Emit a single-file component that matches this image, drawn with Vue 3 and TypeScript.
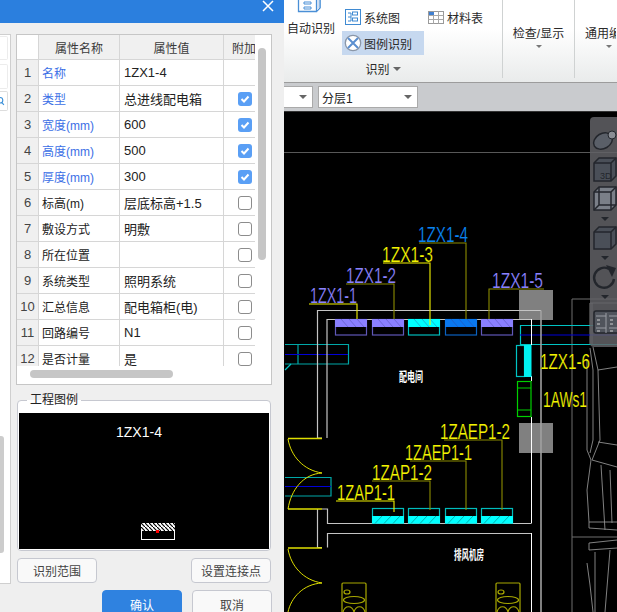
<script setup lang="ts">
interface Row { no: number; name: string; value: string; check: boolean | null; blue: boolean }

const rows: Row[] = [
  { no: 1, name: '名称', value: '1ZX1-4', check: null, blue: true },
  { no: 2, name: '类型', value: '总进线配电箱', check: true, blue: true },
  { no: 3, name: '宽度(mm)', value: '600', check: true, blue: true },
  { no: 4, name: '高度(mm)', value: '500', check: true, blue: true },
  { no: 5, name: '厚度(mm)', value: '300', check: true, blue: true },
  { no: 6, name: '标高(m)', value: '层底标高+1.5', check: false, blue: false },
  { no: 7, name: '敷设方式', value: '明敷', check: false, blue: false },
  { no: 8, name: '所在位置', value: '', check: false, blue: false },
  { no: 9, name: '系统类型', value: '照明系统', check: false, blue: false },
  { no: 10, name: '汇总信息', value: '配电箱柜(电)', check: false, blue: false },
  { no: 11, name: '回路编号', value: 'N1', check: false, blue: false },
  { no: 12, name: '是否计量', value: '是', check: false, blue: false },
]

const YEL = '#f4f400'
const OLV = '#8c8c00'
const PUR = '#8a82ff'

// cad labels: text, x, baseline, width, colour, leader line
const labels = [
  { t: '1ZX1-1', x: 310, y: 303, w: 47, c: PUR, lead: 'M309 304H357V319', lc: YEL },
  { t: '1ZX1-2', x: 346, y: 283, w: 50, c: PUR, lead: 'M346 284H394V319', lc: OLV },
  { t: '1ZX1-3', x: 382, y: 262, w: 51, c: YEL, lead: 'M383 263H430V325', lc: YEL },
  { t: '1ZX1-4', x: 418, y: 242, w: 50, c: '#0a84f4', lead: 'M419 243H466V319', lc: OLV },
  { t: '1ZX1-5', x: 492, y: 288, w: 51, c: PUR, lead: 'M544 289H489V319', lc: OLV },
  { t: '1ZAEP1-2', x: 440, y: 439, w: 70, c: YEL, lead: 'M444 440H502V510', lc: OLV },
  { t: '1ZAEP1-1', x: 405, y: 460, w: 67, c: YEL, lead: 'M410 461H466V510', lc: OLV },
  { t: '1ZAP1-2', x: 372, y: 480, w: 60, c: YEL, lead: 'M372 481H430V510', lc: OLV },
  { t: '1ZAP1-1', x: 337, y: 500, w: 58, c: YEL, lead: 'M336 501H394V512', lc: YEL },
]

const topBoxes = [
  { x: 335, fill: '#8a80ff', line: '#5f58b8' },
  { x: 372, fill: '#8a80ff', line: '#5f58b8' },
  { x: 408, fill: '#00ffff', line: '#00bcbc' },
  { x: 445, fill: '#0a78ee', line: '#0a62c0' },
  { x: 481, fill: '#8a80ff', line: '#5f58b8' },
]
const bottomBoxes = [372, 408, 445, 481]

const furniture = [
  'M593 347L598 370L600 440L592 460',
  'M590 348L593 370L593 440L590 453',
  'M587 360V450L591 460',
  'M598 370L617 367',
  'M598 442L617 445',
  'M592 460L617 467',
  'M601 465L605 530',
  'M610 470L612 523',
  'M591 460L587 490L589 522',
  'M589 522H617M589 528L617 530M589 522V528',
  'M589 543L617 540M589 550L617 548M589 543V550',
  'M595 552V612M587 563L590 585L593 612M610 550L605 612',
  'M590 303H617M592 303V345M590 303V345',
]
</script>

<template>
  <div class="screen">
    <section class="dialog">
      <header class="title">
        <svg width="12" height="12" viewBox="0 0 12 12"><path d="M1 1L11 11M11 1L1 11" stroke="#fff" stroke-width="1.5" /></svg>
      </header>
      <div class="dialog-body">
        <aside class="strip">
          <div class="strip-box b1"></div>
          <div class="strip-box b2"></div>
          <div class="strip-box b3">
            <svg width="9" height="12" viewBox="0 0 9 12"><circle cx="0" cy="5" r="3.6" fill="none" stroke="#3a8fd8" stroke-width="1.4" /><path d="M2.5 8L5 11" stroke="#3a8fd8" stroke-width="1.4" /></svg>
          </div>
          <div class="strip-thumb"></div>
        </aside>
        <main class="main">
          <div class="grid-panel">
            <div class="grid-clip">
              <table class="grid">
                <colgroup><col class="c0" /><col class="c1" /><col class="c2" /><col class="c3" /></colgroup>
                <thead>
                  <tr><th class="corner"></th><th>属性名称</th><th>属性值</th><th class="extra">附加</th></tr>
                </thead>
                <tbody>
                  <tr v-for="r in rows" :key="r.no">
                    <td class="no">{{ r.no }}</td>
                    <td class="name" :class="{ blue: r.blue }">{{ r.name }}</td>
                    <td class="val">{{ r.value }}</td>
                    <td class="chk">
                      <span v-if="r.check !== null" class="box" :class="{ on: r.check }">
                        <svg v-if="r.check" width="14" height="14" viewBox="0 0 14 14"><path d="M3.5 7L6 9.5L10.5 4.5" fill="none" stroke="#fff" stroke-width="2" /></svg>
                      </span>
                    </td>
                  </tr>
                </tbody>
              </table>
            </div>
            <div class="vbar"></div>
            <div class="hbar"></div>
          </div>

          <div class="legend-group">
            <span class="legend-title">工程图例</span>
            <svg class="legend-canvas" width="250" height="136" viewBox="19 412 250 136">
              <rect x="19" y="412" width="250" height="136" fill="#000" />
              <text x="139" y="436" text-anchor="middle" class="legend-text">1ZX1-4</text>
              <defs>
                <pattern id="hatch" width="4" height="4" patternUnits="userSpaceOnUse" patternTransform="translate(141 522)">
                  <rect width="4" height="4" fill="#fff" />
                  <path d="M0 0L4 4" stroke="#000" stroke-width="1.2" />
                </pattern>
              </defs>
              <rect x="141.5" y="522.5" width="33" height="16" fill="#000" stroke="#fff" />
              <rect x="141" y="522" width="34" height="8" fill="url(#hatch)" />
              <rect x="156" y="529" width="3" height="3" fill="#f00" />
            </svg>
          </div>

          <div class="tool-row">
            <button class="btn">识别范围</button>
            <button class="btn">设置连接点</button>
          </div>
          <div class="foot-row">
            <button class="btn foot primary">确认</button>
            <button class="btn foot">取消</button>
          </div>
        </main>
      </div>
    </section>

    <section class="app">
      <div class="ribbon">
        <div class="rb-auto">
          <svg class="auto-icon" width="24" height="13" viewBox="0 0 24 13">
            <path d="M1.5 -2V11.5H19.5V-2M19.5 11.5L23 8V-2" fill="#fff" stroke="#4a8fd6" stroke-width="1.3" />
            <path d="M19.5 11.5L23 8V-2H19.5Z" fill="#cfdff2" stroke="#4a8fd6" />
            <path d="M7 2H14V4H7ZM7 7H14V9H7Z" fill="none" stroke="#4a8fd6" />
          </svg>
          <span class="rb-label">自动识别</span>
        </div>
        <div class="rb-recog">
          <div class="rb-item top">
            <svg width="16" height="16" viewBox="0 0 16 16">
              <rect x=".5" y=".5" width="15" height="15" fill="#fff" stroke="#3f8ad2" />
              <path d="M3 4H6M3 8H6M3 12H6M6 4V12" stroke="#3f8ad2" fill="none" />
              <rect x="7.5" y="3" width="5" height="3" fill="none" stroke="#3f8ad2" />
              <rect x="7.5" y="9" width="5" height="3" fill="none" stroke="#3f8ad2" />
            </svg>
            <span>系统图</span>
          </div>
          <div class="rb-item top second">
            <svg width="16" height="13" viewBox="0 0 16 13">
              <rect x=".5" y=".5" width="15" height="12" fill="#fff" stroke="#9a9a9a" />
              <path d="M.5 4.5H15.5M.5 8.5H15.5M5.5 .5V12.5M10.5 .5V12.5" stroke="#a8a8a8" />
              <rect x="1" y="1" width="5" height="3" fill="#3f7fd0" />
            </svg>
            <span>材料表</span>
          </div>
          <div class="rb-item active">
            <svg width="18" height="18" viewBox="0 0 18 18">
              <circle cx="9" cy="9" r="7.7" fill="#fff" stroke="#8b97a8" stroke-width="1.3" />
              <path d="M4 4L14 14M14 4L4 14" stroke="#5b8fd0" stroke-width="2" />
            </svg>
            <span>图例识别</span>
          </div>
          <div class="rb-caption">识别 <i class="arrow"></i></div>
        </div>
        <div class="rb-col w71">
          <span>检查/显示</span><i class="arrow small"></i>
        </div>
        <div class="rb-col last">
          <span>通用编辑</span><i class="arrow small"></i>
        </div>
      </div>

      <div class="toolbar">
        <div class="select first"><i class="arrow"></i></div>
        <div class="select second"><span>分层1</span><i class="arrow"></i></div>
      </div>

      <svg class="cad" width="333" height="500" viewBox="284 112 333 500">
        <rect x="284" y="112" width="333" height="500" fill="#000" />
        <path d="M284 152.5H617" stroke="#585858" />

        <!-- right side building -->
        <path d="M572 612V299H617M572 537H617" stroke="#6e6e6e" fill="none" />
        <g fill="none" stroke="#8e8e8e" stroke-width=".9">
          <path v-for="(d, i) in furniture" :key="i" :d="d" />
        </g>

        <!-- ducts -->
        <g fill="none" stroke="#00a8a8" stroke-width="1.2">
          <path d="M285 344.5H348.5V364H285M298 344.5V364" />
          <path d="M285 477.5H331V496H285" />
          <path d="M617 325.5H520.5V344.5H617" stroke="#00c4c4" />
          <path d="M285 370L291 364" stroke="#00c4c4" />
        </g>
        <path d="M285 354.5H348M285 486.5H331M520 335H617" stroke="#0000d8" stroke-width="1.2" />

        <!-- gray boxes under walls -->
        <rect x="519" y="290" width="34" height="30" fill="#808080" />
        <rect x="519" y="423" width="34" height="30" fill="#808080" />

        <!-- walls -->
        <g fill="none" stroke="#c4c4c4" stroke-width="1.2">
          <path d="M322 438H317.5V310.5H541M327.5 319.5H531M327 438V319" />
          <path d="M322 509H327.5V523.5H531M317.5 509V547.5H322M327.5 547.5V533.5H531" />
        </g>
        <path d="M541 310.5V612" stroke="#a0a0a0" stroke-width="1.6" />
        <path d="M531.5 319V345M531.5 376V381M531.5 417V523.5M531.5 533V612" stroke="#fff" fill="none" />

        <!-- doors -->
        <g fill="none" stroke="#dede00">
          <path d="M288 438.5H322M288 509H322M288 548H322" stroke-width="1.6" />
          <path d="M288 439C291 456 303 470 322 473C303 474 291 490 288 509" />
          <path d="M288 549C291 566 303 580 322 583C303 584 291 598 288 612" />
        </g>

        <!-- distribution boxes -->
        <g v-for="b in topBoxes" :key="b.x">
          <rect :x="b.x + .5" y="319.5" width="31" height="15.5" fill="#000" :stroke="b.line" stroke-width="1.2" />
          <rect :x="b.x" y="319" width="32" height="8" :fill="b.fill" />
          <path :d="`M${b.x + 6} 319L${b.x + 13} 327M${b.x + 14} 319L${b.x + 21} 327M${b.x + 22} 319L${b.x + 29} 327`" stroke="#3a3a90" stroke-width=".6" opacity=".6" />
        </g>
        <g v-for="x in bottomBoxes" :key="x">
          <rect :x="x + .5" y="508.5" width="31" height="14.5" fill="#000" stroke="#00bcbc" stroke-width="1.2" />
          <rect :x="x" y="516" width="32" height="7.5" fill="#00ffff" />
          <path :d="`M${x + 3} 523.5L${x + 10} 516M${x + 12} 523.5L${x + 19} 516M${x + 21} 523.5L${x + 28} 516`" stroke="#008c8c" stroke-width=".7" />
        </g>

        <!-- riser on the right wall -->
        <rect x="516.5" y="345.5" width="8" height="31" fill="#000" stroke="#00c4c4" stroke-width="1.2" />
        <rect x="524" y="345" width="7.5" height="32" fill="#00f0f0" />
        <rect x="517.5" y="381.5" width="13.5" height="35" fill="none" stroke="#00d000" stroke-width="1.2" />
        <path d="M517 388H531M517 410H531" stroke="#00d000" />

        <!-- leaders and labels -->
        <path v-for="l in labels" :key="l.t + 'l'" :d="l.lead" fill="none" :stroke="l.lc" stroke-width="1.1" />
        <text
          v-for="l in labels"
          :key="l.t"
          class="cad-label"
          :x="l.x"
          :y="l.y"
          :textLength="l.w"
          lengthAdjust="spacingAndGlyphs"
          :fill="l.c"
        >{{ l.t }}</text>
        <text class="cad-label" x="540" y="369" textLength="50" lengthAdjust="spacingAndGlyphs" fill="#f4f400">1ZX1-6</text>
        <text class="cad-label" x="543" y="407" textLength="44" lengthAdjust="spacingAndGlyphs" fill="#f4f400">1AWs1</text>

        <text class="cad-room" x="399" y="381" textLength="24" lengthAdjust="spacingAndGlyphs">配电间</text>
        <text class="cad-room" x="454" y="559" textLength="30" lengthAdjust="spacingAndGlyphs">排风机房</text>

        <!-- fixtures -->
        <g v-for="x in [342, 496]" :key="x" fill="none" stroke="#a8a800" stroke-width="1.2">
          <path :d="`M${x} 612V584Q${x} 583 ${x + 1} 583H${x + 23}Q${x + 24} 583 ${x + 24} 584V612`" />
          <ellipse :cx="x + 5" cy="592" rx="3" ry="2" />
          <ellipse :cx="x + 12" cy="600" rx="10.5" ry="3.5" />
          <path :d="`M${x + 1} 612C${x + 3} 605 ${x + 10} 605 ${x + 12} 612C${x + 14} 605 ${x + 21} 605 ${x + 23} 612`" />
        </g>

        <!-- floating view toolbar -->
        <rect x="590" y="117" width="40" height="230" rx="4" fill="#626266" fill-opacity=".85" />
        <g fill="#4a4f58" stroke="#23262c" stroke-width="1.5">
          <ellipse cx="603" cy="141" rx="10" ry="7.5" transform="rotate(-30 603 141)" fill="#5a5f68" />
          <circle cx="612" cy="135" r="4" fill="#8a8d94" stroke-width="1" />
          <path d="M594 163L599 158H616V176L611 181H594Z" />
          <path d="M594 163H611V181M611 163L616 158" fill="none" />
          <path d="M594 192L599 187H616V205L611 210H594Z" fill="#7a7f88" />
          <path d="M594 192H611V210M611 192L616 187M599 187V205H616M599 205L594 210" fill="none" />
          <path d="M594 232L599 227H616V244L611 249H594Z" />
          <path d="M594 232H611V249M611 232L616 227" fill="none" />
          <path d="M609 269A10 10 0 1 0 614 279" fill="none" stroke-width="2.4" />
          <path d="M606 265L616 268L612 277Z" fill="#23262c" stroke="none" />
          <rect x="594" y="311" width="26" height="22" rx="2" fill="#50545c" />
          <path d="M596 316H606M596 328H606M609 316H617M609 328H617M606 313V333" fill="none" stroke="#9a9da4" stroke-width="1" />
          <path d="M597 320H600M597 324H600M597 331H600M610 320H613M610 324H613M610 331H613" fill="none" stroke="#d0d0d0" stroke-width="1" />
        </g>
        <text class="cad-3d" x="600" y="179">3D</text>
        <g fill="#23262c">
          <path d="M601 217H609L605 221ZM601 256H609L605 260ZM601 295H609L605 299Z" />
        </g>
      </svg>
    </section>
  </div>
</template>

<style scoped>
.screen {
  display: flex;
  width: 617px;
  height: 612px;
  overflow: hidden;
  font-family: "Liberation Sans", "Noto Sans CJK SC", sans-serif;
  font-size: 12px;
  color: #222;
}

/* dialog */
.dialog {
  width: 284px;
  flex-shrink: 0;
  background: #efefef;
  display: flex;
  flex-direction: column;
}
.title {
  height: 23px;
  flex-shrink: 0;
  background: #2b7fde;
  display: flex;
  justify-content: flex-end;
  padding: 0 10px 0 0;
}
.dialog-body {
  display: flex;
  padding-top: 11px;
}
.strip {
  position: relative;
  width: 10px;
  height: 548px;
  background: #fff;
  border: 1px solid #cfcfcf;
  border-left: none;
  flex-shrink: 0;
  display: flex;
  flex-direction: column;
  box-sizing: content-box;
}
.strip-box {
  width: 8px;
  border: 1px solid #ececec;
  border-left: none;
  box-sizing: border-box;
  border-radius: 0 2px 2px 0;
}
.b1 { height: 24px; margin-top: 1px; }
.b2 { height: 25px; margin-top: 4px; }
.b3 {
  height: 20px;
  margin-top: 2px;
  border-color: #ddd;
  overflow: hidden;
  display: flex;
  align-items: center;
}
.strip-thumb {
  position: absolute;
  left: 0;
  top: 401px;
  width: 4px;
  height: 117px;
  background: #ccc;
  border-radius: 0 3px 3px 0;
}
.main {
  width: 256px;
  margin-left: 5px;
  flex-shrink: 0;
}
.grid-panel {
  position: relative;
  height: 349px;
  background: #fff;
  border: 1px solid #c6c6c6;
  box-sizing: content-box;
  width: 254px;
}
.grid-clip {
  width: 238px;
  height: 331px;
  overflow: hidden;
}
.grid {
  table-layout: fixed;
  border-collapse: separate;
  border-spacing: 0;
  width: 238px;
}
.c0 { width: 22px; }
.c1 { width: 81px; }
.c2 { width: 104px; }
.c3 { width: 31px; }
.grid th {
  height: 25px;
  padding: 0;
  font-weight: 400;
  background: #f0f0f0;
  color: #3a3a3a;
  border-right: 1px solid #d6d6d6;
  border-bottom: 1px solid #d6d6d6;
  box-sizing: border-box;
}
.grid th.corner {
  background: #fff;
}
.grid th.extra {
  border-right: none;
  text-align: left;
  padding-left: 8px;
  white-space: nowrap;
  overflow: hidden;
}
.grid td {
  height: 26px;
  padding: 0;
  border-right: 1px solid #d6d6d6;
  border-bottom: 1px solid #d6d6d6;
  box-sizing: border-box;
  white-space: nowrap;
  overflow: hidden;
  color: #222;
}
.grid td.no {
  background: #f0f0f0;
  text-align: center;
  font-size: 13px;
  color: #444;
}
.grid td.name {
  padding-left: 3px;
}
.grid td.name.blue {
  color: #3b6fe6;
}
.grid td.val {
  padding-left: 4px;
  font-size: 13px;
}
.grid td.chk {
  border-right: none;
  text-align: right;
  padding-right: 3px;
}
.box {
  display: inline-block;
  width: 14px;
  height: 14px;
  box-sizing: border-box;
  border: 1px solid #8c8c8c;
  border-radius: 3px;
  background: #fff;
  vertical-align: middle;
}
.box.on {
  border: none;
  background: #5a9ff5;
}
.box svg {
  display: block;
}
.vbar {
  position: absolute;
  left: 241px;
  top: 13px;
  width: 8px;
  height: 212px;
  border-radius: 4px;
  background: #c6c6c6;
}
.hbar {
  position: absolute;
  left: 13px;
  top: 335px;
  width: 143px;
  height: 8px;
  border-radius: 4px;
  background: #c6c6c6;
}
.legend-group {
  position: relative;
  margin: 15px 0 0 1px;
  width: 254px;
  height: 151px;
  box-sizing: border-box;
  border: 1px solid #c6c8d0;
  border-radius: 4px;
  background: #fff;
  padding: 12px 1px 0;
}
.legend-title {
  position: absolute;
  left: 9px;
  top: -8px;
  padding: 0 3px;
  background: linear-gradient(#efefef 50%, #fff 50%);
  line-height: 14px;
}
.legend-canvas {
  display: block;
}
.legend-text {
  font-family: "Liberation Sans", sans-serif;
  font-size: 14px;
  fill: #fff;
}
.tool-row {
  display: flex;
  justify-content: space-between;
  margin: 7px 0 0 1px;
  width: 254px;
}
.btn {
  width: 80px;
  height: 25px;
  padding: 0;
  font: inherit;
  color: #444;
  background: #f9f9f9;
  border: 1px solid #c6c8d0;
  border-radius: 4px;
}
.foot-row {
  display: flex;
  justify-content: flex-end;
  gap: 10px;
  margin-top: 7px;
}
.btn.foot {
  height: 28px;
  flex-shrink: 0;
}
.btn.primary {
  background: #2f82e0;
  border-color: #2f82e0;
  color: #fff;
}

/* application side */
.app {
  flex: 1;
  min-width: 0;
  display: flex;
  flex-direction: column;
}
.ribbon {
  height: 82px;
  flex-shrink: 0;
  display: flex;
  background: linear-gradient(#fff 35%, #e9ebeb);
  border-bottom: 1px solid #9c9c9c;
  box-sizing: content-box;
  color: #2a2a2a;
  white-space: nowrap;
}
.rb-auto {
  width: 58px;
  flex-shrink: 0;
  display: flex;
  flex-direction: column;
  align-items: flex-start;
}
.auto-icon {
  margin-left: 13px;
  display: block;
}
.rb-label {
  margin: 8px 0 0 3px;
  line-height: 16px;
}
.rb-recog {
  width: 161px;
  flex-shrink: 0;
  display: grid;
  grid-template-columns: 82px 79px;
  grid-template-rows: 24px 24px 24px;
  padding-top: 7px;
  height: 78px;
  box-sizing: border-box;
  border-right: 1px solid #cfd2d2;
}
.rb-item {
  display: flex;
  align-items: center;
  gap: 3px;
  padding-left: 3px;
}
.rb-item.top {
  padding-bottom: 4px;
}
.rb-item.second {
  padding-left: 4px;
}
.rb-item.active {
  background: #c6d8ef;
  padding-left: 2px;
  gap: 2px;
}
.rb-caption {
  grid-column: 1;
  grid-row: 3;
  display: flex;
  align-items: center;
  justify-content: center;
  gap: 3px;
  margin-top: 3px;
}
.arrow {
  display: inline-block;
  width: 0;
  height: 0;
  border: 4px solid transparent;
  border-top: 4px solid #666;
  border-bottom: none;
}
.arrow.small {
  margin-top: 4px;
  border-width: 3px 3px 0;
  border-top-color: #777;
}
.rb-col {
  height: 78px;
  box-sizing: border-box;
  padding-top: 24px;
  display: flex;
  flex-direction: column;
  align-items: center;
  border-right: 1px solid #cfd2d2;
}
.w71 {
  width: 72px;
  flex-shrink: 0;
}
.rb-col.last {
  width: 41px;
  flex-shrink: 0;
  align-items: flex-start;
  padding-left: 10px;
  overflow: hidden;
  border-right: none;
}
.rb-col.last .arrow {
  margin-left: 21px;
}
.toolbar {
  height: 29px;
  flex-shrink: 0;
  box-sizing: border-box;
  background: #c9cbce;
  border-bottom: 1px solid #333;
  display: flex;
  gap: 5px;
  padding-top: 3px;
}
.select {
  height: 22px;
  box-sizing: border-box;
  background: #fff;
  border: 1px solid #aaa;
  display: flex;
  align-items: center;
  justify-content: space-between;
  padding: 0 5px 0 3px;
  font-size: 12px;
}
.select.first {
  width: 29px;
  border-left: none;
  justify-content: flex-end;
}
.select.second {
  width: 100px;
}
.cad {
  display: block;
  flex-shrink: 0;
}
.cad-label {
  font-family: "Liberation Sans", sans-serif;
  font-size: 22px;
  stroke: #000;
  stroke-width: .2px;
}
.cad-room {
  font-family: "Noto Sans CJK SC", sans-serif;
  font-size: 13px;
  font-weight: 700;
  fill: #fff;
}
.cad-3d {
  font-family: "Liberation Sans", sans-serif;
  font-size: 9px;
  fill: #23262c;
}
</style>
